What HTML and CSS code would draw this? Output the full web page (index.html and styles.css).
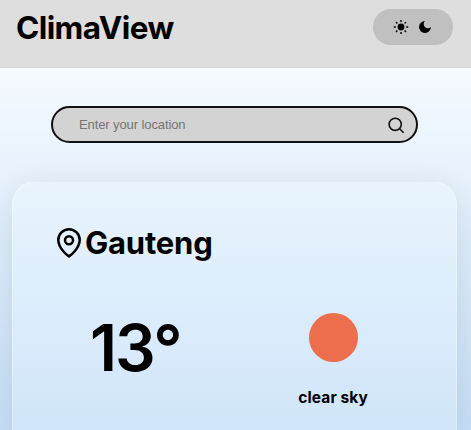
FILE: index.html
```html
<!DOCTYPE html>
<html lang="en">
<head>
<meta charset="utf-8">
<title>ClimaView</title>
<link rel="stylesheet" href="styles.css">
</head>
<body>
<header class="header">
  <h1 class="brand">ClimaView</h1>
  <div class="theme">
    <svg width="16" height="16" viewBox="0 0 16 16"><circle cx="8" cy="8" r="3.4"/><path d="M8 1v2M8 13v2M.8 8h2M13.2 8h2M3 3l1.4 1.4M11.6 11.6L13 13M3 13l1.4-1.4M11.6 4.4L13 3" fill="none" stroke="#000" stroke-width="1.4"/></svg>
    <svg width="16" height="16" viewBox="0 0 16 16"><path d="M8 2A6 6 0 1 0 14 8.1A3.7 3.7 0 0 1 8 2Z"/></svg>
  </div>
</header>
<main class="main">
  <div class="search">
    <input class="search-input" type="text" placeholder="Enter your location">
    <svg width="18" height="18" viewBox="0 0 18 18" fill="none" stroke="#111" stroke-width="1.6"><circle cx="7.2" cy="8.3" r="6.1"/><path d="M11.6 12.7L15.6 16.7"/></svg>
  </div>
  <section class="card">
    <div class="place">
      <svg width="26" height="32" viewBox="0 0 26 32" fill="none" stroke="#000" stroke-width="2.5" stroke-linejoin="round"><path d="M13 29.4C11.5 28.5 2.3 21.3 2.3 13A10.7 10.7 0 0 1 23.7 13C23.7 21.3 14.5 28.5 13 29.4Z"/><circle cx="13" cy="13.2" r="4"/></svg>
      <h2 class="city">Gauteng</h2>
    </div>
    <div class="weather">
      <div class="temp">13°</div>
      <div class="condition">
        <div class="sun"></div>
        <p class="label">clear sky</p>
      </div>
    </div>
  </section>
</main>
</body>
</html>
```

FILE: styles.css
```css
* { box-sizing: border-box; margin: 0; padding: 0; }
body {
  height: 430px;
  overflow: hidden;
  font-family: Inter, sans-serif;
  color: #000;
  background: linear-gradient(#f5faff 68px, #c6dff7 430px);
}
svg { display: block; flex: none; }
.header {
  height: 68px;
  display: flex;
  justify-content: space-between;
  align-items: flex-start;
  padding: 9px 18px 0 16px;
  background: #dedede;
  border-bottom: 1px solid #d2d6d9;
}
.brand { font-size: 31.5px; line-height: 38px; font-weight: 700; letter-spacing: -0.6px; }
.theme {
  width: 80px;
  height: 36px;
  border-radius: 18px;
  background: #c0c0c0;
  display: flex;
  align-items: center;
  justify-content: center;
  gap: 8px;
}
.main { height: 362px; overflow: hidden; padding: 38px 14px 0 12px; }
.search {
  width: 367px;
  height: 37px;
  margin-left: 39px;
  display: flex;
  align-items: center;
  padding: 0 10px 0 26px;
  border: 2px solid #111;
  border-radius: 19px;
  background: #d3d3d3;
}
.search-input {
  flex: 1;
  min-width: 0;
  border: 0;
  outline: 0;
  background: none;
  font: 13px "Liberation Sans", sans-serif;
  letter-spacing: -0.1px;
}
.search-input::placeholder { color: #757575; }
.card {
  height: 249px;
  margin-top: 38px;
  padding: 45px 44px 0 43px;
  border: 1px solid rgba(255, 255, 255, .35);
  border-bottom: 0;
  border-radius: 24px 24px 0 0;
  background: linear-gradient(#e9f4fd, #d0e5fa);
  box-shadow: 0 8px 32px rgba(0, 0, 0, .1);
}
.place { display: flex; align-items: center; height: 32px; gap: 3px; }
.city { font-size: 31px; line-height: 34px; font-weight: 700; letter-spacing: -0.2px; }
.weather { display: flex; justify-content: space-between; padding: 54px 44px 0 34px; }
.temp { font-size: 64px; line-height: 70px; font-weight: 600; letter-spacing: -2px; }
.condition { display: flex; flex-direction: column; align-items: center; }
.sun { width: 49px; height: 49px; border-radius: 50%; background: #ec6e4c; }
.label { margin-top: 26px; font-size: 15.5px; line-height: 20px; font-weight: 700; letter-spacing: 0.1px; }
```
